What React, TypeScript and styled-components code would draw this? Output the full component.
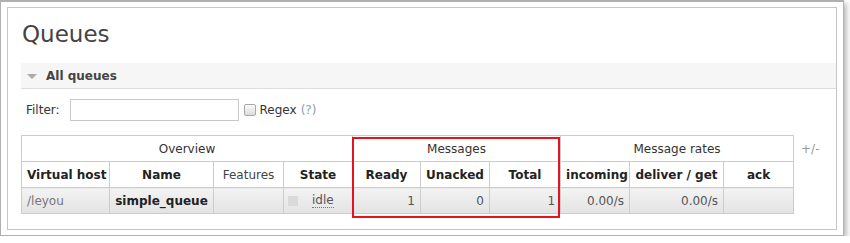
import React from "react";
import styled, { createGlobalStyle } from "styled-components";

const GlobalStyle = createGlobalStyle`
  body {
    margin: 0;
    background: #fff;
    font-family: "DejaVu Sans", Verdana, sans-serif;
    font-size: 12px;
    color: #444;
  }
`;

const Frame = styled.div`
  box-sizing: border-box;
  width: 844px;
  height: 236px;
  border: 1px solid #b0b0b0;
  border-top-width: 2px;
  padding: 5px 6px 5px 6px;
  background: #fff;
  box-shadow: 3px 3px 5px rgba(0, 0, 0, 0.25);
`;

const Panel = styled.div`
  box-sizing: border-box;
  height: 100%;
  border: 1px solid #c6c6c6;
  padding: 0 0 0 13px;
`;

const Title = styled.h1`
  margin: 12px 0 0 1px;
  font-size: 23px;
  line-height: 28px;
  font-weight: normal;
  color: #444;
`;

const SectionBar = styled.div`
  display: flex;
  align-items: center;
  height: 25px;
  margin-top: 15px;
  background: #f6f6f6;
  border-bottom: 1px solid #dcdcdc;
  font-weight: bold;
  color: #444;
`;

const Arrow = styled.span`
  width: 0;
  height: 0;
  margin: 1px 9px 0 6px;
  border-left: 5px solid transparent;
  border-right: 5px solid transparent;
  border-top: 5px solid #aaa;
`;

const FilterRow = styled.div`
  display: flex;
  align-items: center;
  margin-top: 10px;
  padding-left: 5px;
  color: #333;
`;

const FilterInput = styled.input`
  box-sizing: border-box;
  width: 169px;
  height: 22px;
  margin: 0 5px 0 10px;
  border: 1px solid #c8c8c8;
  padding: 2px 4px;
`;

const CheckBox = styled.span`
  box-sizing: border-box;
  width: 12px;
  height: 12px;
  margin-right: 4px;
  border: 1px solid #a8a8a8;
  border-radius: 2px;
  background: linear-gradient(#fafafa, #dcdcdc);
`;

const Help = styled.span`
  margin-left: 4px;
  color: #8a9db5;
`;

const TableRow = styled.div`
  display: flex;
  align-items: flex-start;
  margin-top: 14px;
`;

const TableWrap = styled.div`
  position: relative;
`;

const Table = styled.table`
  border-collapse: collapse;
  table-layout: fixed;
  width: 773px;

  th,
  td {
    border: 1px solid #cccccc;
    height: 25px;
    padding: 0 5px;
    white-space: nowrap;
    overflow: hidden;
  }
`;

const GroupHead = styled.th`
  font-weight: normal;
  color: #333;
  background: #fff;
  text-align: center;
`;

const ColHead = styled.th<{ $plain?: boolean }>`
  font-weight: ${(p) => (p.$plain ? "normal" : "bold")};
  color: ${(p) => (p.$plain ? "#444" : "#222")};
  background: #fff;
  text-align: center;
`;

const Cell = styled.td<{ $align?: "left" | "center" | "right"; $bold?: boolean; $tone?: string }>`
  text-align: ${(p) => p.$align || "right"};
  font-weight: ${(p) => (p.$bold ? "bold" : "normal")};
  color: ${(p) => p.$tone || "#555"};
  background: linear-gradient(#f3f3f3, #e3e3e3);
`;

const StateBox = styled.div`
  display: flex;
  align-items: center;
`;

const StateDot = styled.span`
  width: 10px;
  height: 10px;
  margin: 0 14px 0 -1px;
  background: #dadada;
`;

const Idle = styled.span`
  color: #555;
  border-bottom: 1px dotted #777;
  line-height: 13px;
`;

const Toggle = styled.span`
  margin: 7px 0 0 7px;
  color: #999;
`;

const Highlight = styled.div`
  position: absolute;
  left: 331px;
  top: 2px;
  width: 208px;
  height: 81px;
  box-sizing: border-box;
  border: 2px solid #e3141e;
  pointer-events: none;
`;

const widths = [88, 104, 70, 69, 68, 69, 71, 69, 94, 70];

export default function App() {
  return (
    <>
      <GlobalStyle />
      <Frame>
        <Panel>
          <Title>Queues</Title>
          <SectionBar>
            <Arrow />
            All queues
          </SectionBar>
          <FilterRow>
            Filter:
            <FilterInput type="text" />
            <CheckBox />
            Regex
            <Help>(?)</Help>
          </FilterRow>
          <TableRow>
            <TableWrap>
              <Table>
                <colgroup>
                  {widths.map((w, i) => (
                    <col key={i} style={{ width: w }} />
                  ))}
                </colgroup>
                <thead>
                  <tr>
                    <GroupHead colSpan={4}>Overview</GroupHead>
                    <GroupHead colSpan={3}>Messages</GroupHead>
                    <GroupHead colSpan={3}>Message rates</GroupHead>
                  </tr>
                  <tr>
                    <ColHead>Virtual host</ColHead>
                    <ColHead>Name</ColHead>
                    <ColHead $plain>Features</ColHead>
                    <ColHead>State</ColHead>
                    <ColHead>Ready</ColHead>
                    <ColHead>Unacked</ColHead>
                    <ColHead>Total</ColHead>
                    <ColHead>incoming</ColHead>
                    <ColHead>deliver / get</ColHead>
                    <ColHead>ack</ColHead>
                  </tr>
                </thead>
                <tbody>
                  <tr>
                    <Cell $align="left" $tone="#777">/leyou</Cell>
                    <Cell $align="center" $bold $tone="#222">simple_queue</Cell>
                    <Cell />
                    <Cell $align="left">
                      <StateBox>
                        <StateDot />
                        <Idle>idle</Idle>
                      </StateBox>
                    </Cell>
                    <Cell>1</Cell>
                    <Cell>0</Cell>
                    <Cell>1</Cell>
                    <Cell>0.00/s</Cell>
                    <Cell>0.00/s</Cell>
                    <Cell />
                  </tr>
                </tbody>
              </Table>
              <Highlight />
            </TableWrap>
            <Toggle>+/-</Toggle>
          </TableRow>
        </Panel>
      </Frame>
    </>
  );
}
